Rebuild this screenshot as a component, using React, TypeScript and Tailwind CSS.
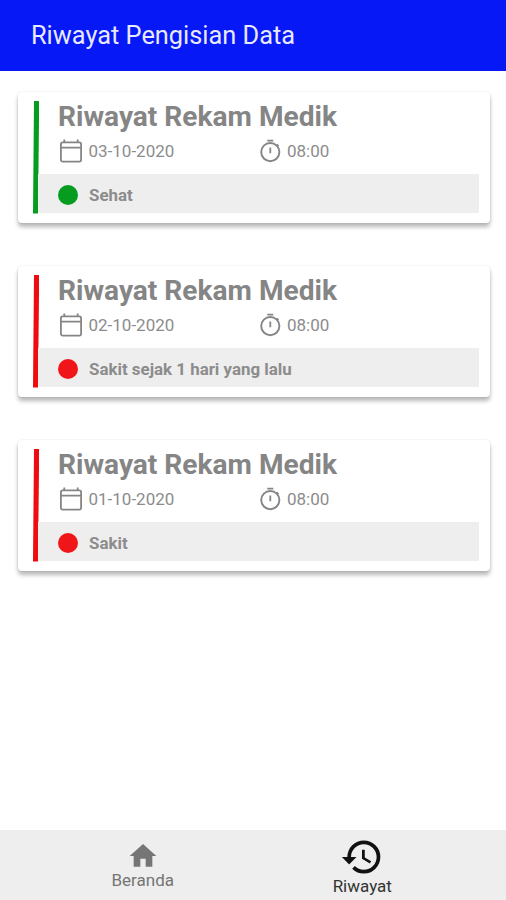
type Entry = {
  date: string
  time: string
  status: string
  healthy: boolean
}

const entries: Entry[] = [
  { date: "03-10-2020", time: "08:00", status: "Sehat", healthy: true },
  { date: "02-10-2020", time: "08:00", status: "Sakit sejak 1 hari yang lalu", healthy: false },
  { date: "01-10-2020", time: "08:00", status: "Sakit", healthy: false },
]

function CalendarIcon() {
  return (
    <svg width="24" height="26" viewBox="0 0 24 26" fill="none" stroke="#858585" strokeWidth="1.8">
      <rect x="1.9" y="4.4" width="20.2" height="19.2" rx="1.8" />
      <path d="M2 9.7h20M5.3 1.6v3M18.7 1.6v3" />
    </svg>
  )
}

function TimerIcon() {
  return (
    <svg width="24" height="26" viewBox="0 0 24 26" fill="none" stroke="#858585">
      <circle cx="12.3" cy="14.1" r="9.1" strokeWidth="1.9" />
      <path d="M9.3 2.7h6M12.3 9.5v5.8M18.6 6.4l1.9 1.8" strokeWidth="1.8" />
    </svg>
  )
}

function HistoryCard({ entry }: { entry: Entry }) {
  return (
    <article className="h-[130.5px] rounded-[4px] bg-white pt-[8.5px] pr-[11px] pl-[15px] shadow-[0_4px_4px_rgba(0,0,0,0.28),0_0_2px_rgba(0,0,0,0.12)]">
      <div className="flex h-[112.5px]">
        <svg width="6" height="113" viewBox="0 0 6 113" className="shrink-0">
          <path d="M1 0h5.2L5 112.5H0z" fill={entry.healthy ? "#059c20" : "#ee0c10"} />
        </svg>
        <div className="flex flex-1 flex-col">
          <h2 className="h-[37px] pl-[19px] text-[28.1px] leading-[31px] font-bold text-[#858585]">
            Riwayat Rekam Medik
          </h2>
          <div className="flex h-9 pl-[19.5px] text-[17px] leading-[26px] text-[#8c8c8c]">
            <div className="flex w-[199.5px] gap-1.5">
              <CalendarIcon />
              <span>{entry.date}</span>
            </div>
            <div className="flex gap-[5px]">
              <TimerIcon />
              <span>{entry.time}</span>
            </div>
          </div>
          <div className="-ml-px flex flex-1 items-center gap-[11px] bg-[#eeeeee] pt-[2.5px] pl-5 text-[16.9px] leading-5 font-bold text-[#8c8c8c]">
            <span className={`h-5 w-5 rounded-full ${entry.healthy ? "bg-[#059c20]" : "bg-[#f01518]"}`} />
            <span>{entry.status}</span>
          </div>
        </div>
      </div>
    </article>
  )
}

function BottomNav() {
  return (
    <nav className="flex h-[70px] bg-[#eeeeee] pr-[34px] pl-[33px] text-[17px] leading-5">
      <a className="flex flex-1 flex-col items-center pt-2.5 text-[#757575]">
        <svg width="32" height="32" viewBox="0 0 24 24" fill="currentColor">
          <path d="M10 20v-6h4v6h5v-8h3L12 3 2 12h3v8z" />
        </svg>
        <span className="-mt-0.5">Beranda</span>
      </a>
      <a className="flex flex-1 flex-col items-center pt-[5px] text-[#333333]">
        <svg width="44" height="44" viewBox="0 0 24 24" fill="#111111">
          <path d="M13 3a9 9 0 0 0-9 9H1l3.89 3.89.07.14L9 12H6c0-3.87 3.13-7 7-7s7 3.13 7 7-3.13 7-7 7c-1.93 0-3.68-.79-4.94-2.06l-1.42 1.42A8.954 8.954 0 0 0 13 21a9 9 0 0 0 0-18zm-1 5v5l4.28 2.54.72-1.21-3.5-2.08V8H12z" />
        </svg>
        <span className="-mt-[3px]">Riwayat</span>
      </a>
    </nav>
  )
}

export default function App() {
  return (
    <div className="flex h-screen flex-col overflow-hidden bg-white font-['Roboto',sans-serif]">
      <header className="flex h-[71px] items-center bg-[#0518f5] pl-[31px]">
        <h1 className="text-[25.35px] leading-[71px] text-[#e8e8ff]">Riwayat Pengisian Data</h1>
      </header>
      <main className="flex flex-1 flex-col gap-[43.7px] pt-[21px] pr-[16.5px] pl-[18px]">
        {entries.map((entry) => (
          <HistoryCard key={entry.date} entry={entry} />
        ))}
      </main>
      <BottomNav />
    </div>
  )
}
